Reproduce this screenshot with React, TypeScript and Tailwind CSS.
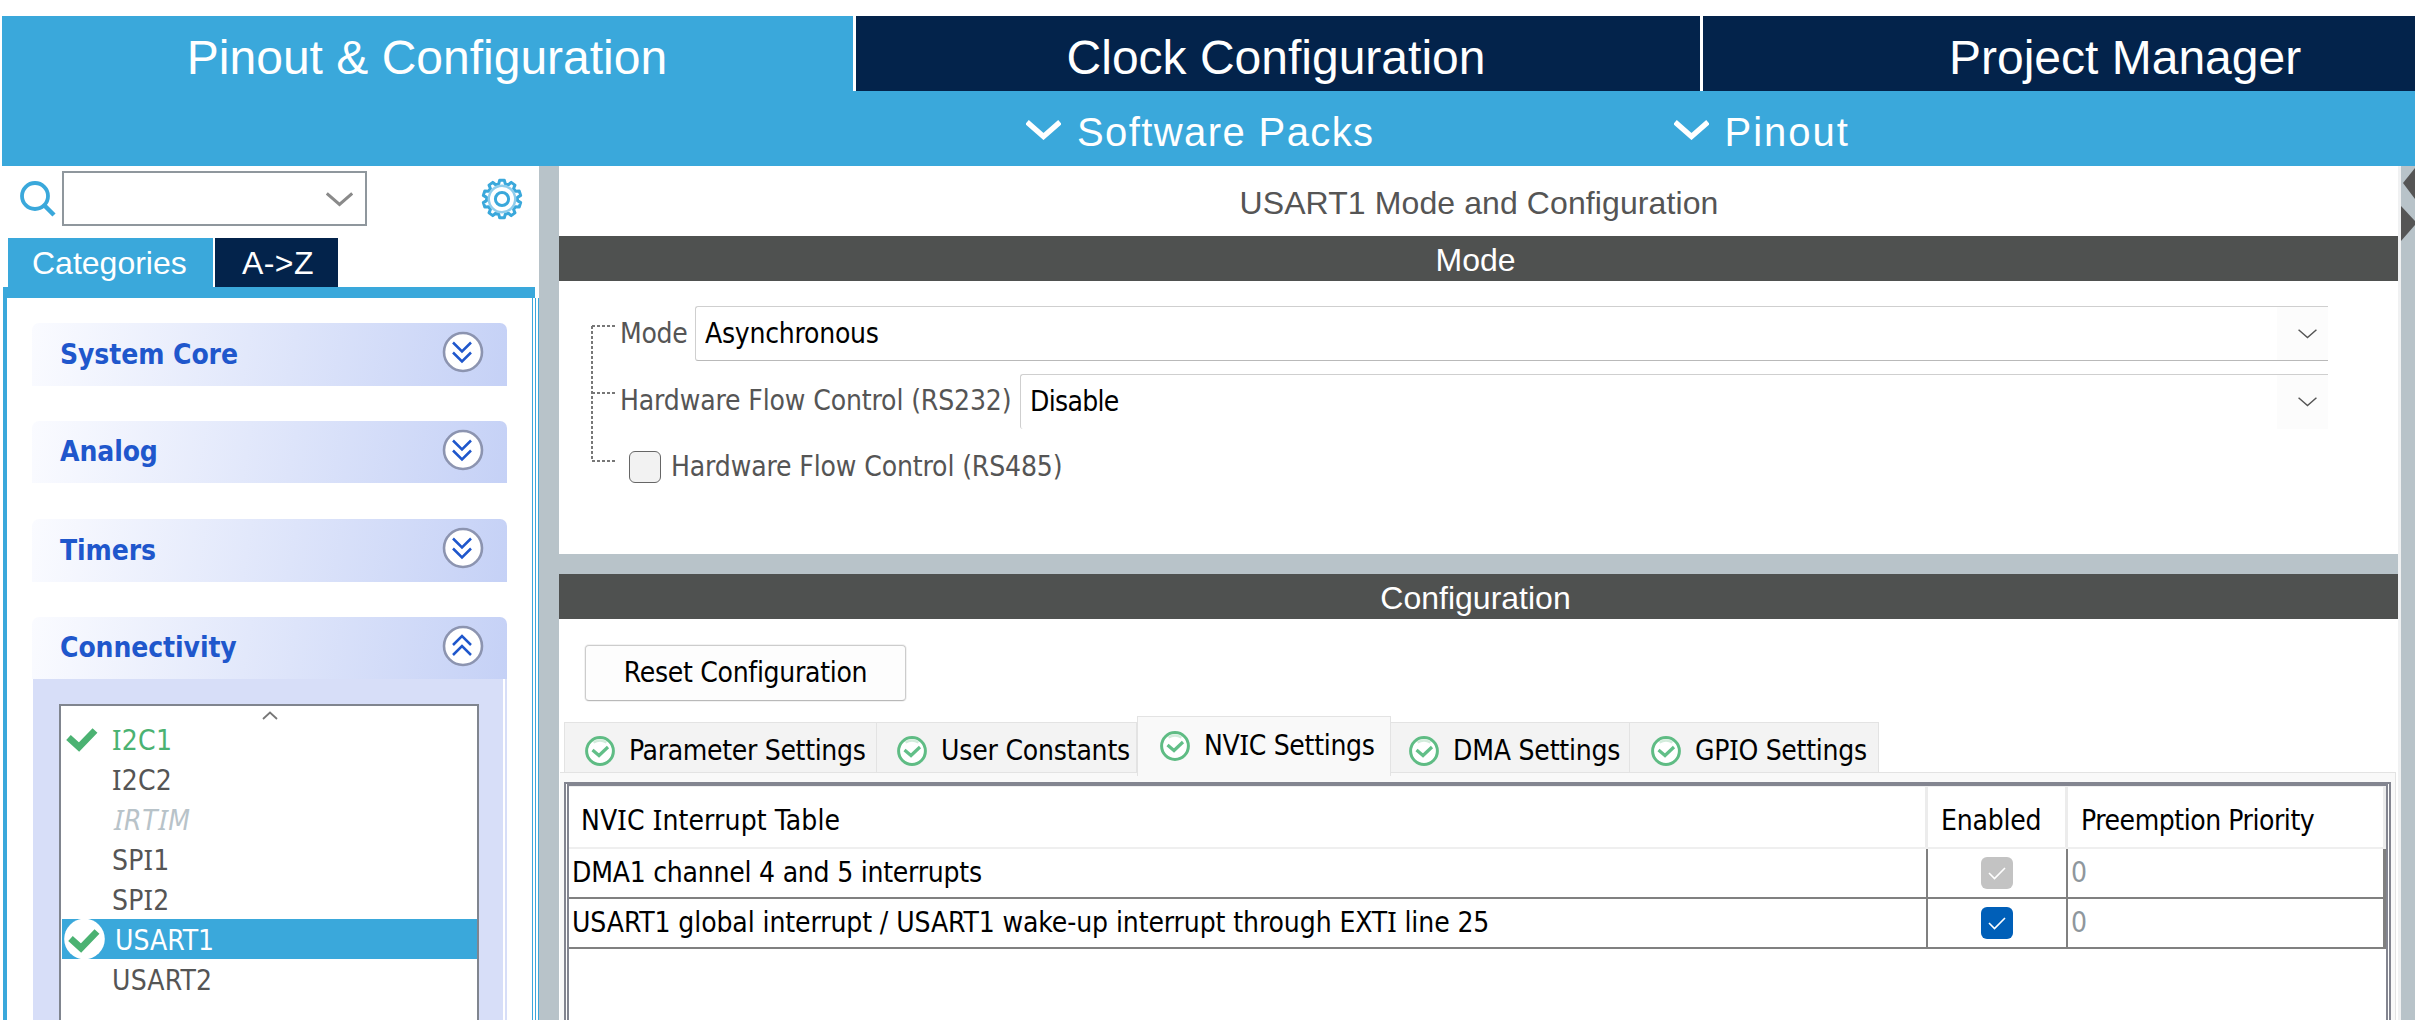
import React from "react";

const SANS = "font-['DejaVu_Sans_Condensed','DejaVu_Sans',sans-serif] text-[28px] leading-[40px] whitespace-nowrap";
const ARIAL = "font-['Liberation_Sans',sans-serif] whitespace-nowrap";

/** Label text whose capital "I" carries serifs. */
function Label({ text, className = "" }: { text: string; className?: string }) {
  return (
    <span className={className}>
      {text.split(/(I)/).map((part, i) =>
        part === "I" ? (
          <span key={i} className="font-['Noto_Sans',sans-serif] leading-none">I</span>
        ) : (
          part
        ),
      )}
    </span>
  );
}

function SearchIcon() {
  return (
    <svg width="36" height="36" viewBox="0 0 36 36" fill="none" stroke="#3aa8db" className="shrink-0">
      <circle cx="15" cy="15" r="13" strokeWidth="3.8" />
      <path d="M24.5 24.5 L34 34" strokeWidth="4.5" />
    </svg>
  );
}

function gearPath() {
  const pts: string[] = [];
  for (let i = 0; i < 10; i++) {
    const a = (i * 36 * Math.PI) / 180;
    const at = (r: number, d: number) => {
      const t = a + (d * Math.PI) / 180;
      return `${(21 + r * Math.sin(t)).toFixed(2)} ${(21 - r * Math.cos(t)).toFixed(2)}`;
    };
    pts.push(`${i ? "L" : "M"}${at(15.6, -12)}`, `L${at(19, -7)}`, `L${at(19, 7)}`, `L${at(15.6, 12)}`);
  }
  return pts.join(" ") + "Z";
}

function GearIcon() {
  return (
    <svg width="42" height="42" viewBox="0 0 42 42" fill="none" stroke="#3aa8db" className="shrink-0">
      <path d={gearPath()} strokeWidth="3" strokeLinejoin="round" />
      <circle cx="21" cy="21" r="13.2" stroke="#8fcdec" strokeWidth="2.4" />
      <circle cx="21" cy="21" r="6.6" strokeWidth="3" />
    </svg>
  );
}

function StatusIcon() {
  return (
    <svg width="30" height="30" viewBox="0 0 30 30" fill="none" className="shrink-0">
      <circle cx="15" cy="15" r="13.4" fill="#fff" stroke="#5fbc84" strokeWidth="3" />
      <path d="M8.5 6.5 Q15 2.5 21.5 6.5" stroke="#d3ecdc" strokeWidth="2.5" />
      <path d="M7.5 14 L14 19.5 L23 11" stroke="#62bf88" strokeWidth="3.2" />
    </svg>
  );
}

function Tick() {
  return <path d="M2.5 11.5 L13 21 L29 4.5" stroke="#4bb272" strokeWidth="6.8" />;
}

function Chevron({ className, width, color, weight = 5.5 }: { className?: string; width: number; color: string; weight?: number }) {
  return (
    <svg width={width} height={width * 0.6} viewBox="0 0 34 20.4" fill="none" className={className}>
      <path d="M1 3 L17 17 L33 3" stroke={color} strokeWidth={weight} />
    </svg>
  );
}

function Toggle({ open }: { open?: boolean }) {
  return (
    <svg width="42" height="42" viewBox="0 0 42 42" fill="none" className="shrink-0">
      <circle cx="21" cy="21" r="19" fill="#fff" stroke="#8c94b0" strokeWidth="2.6" />
      <path
        d={open ? "M11 20 L20 11 L29 20 M11 30 L20 21 L29 30" : "M11 11.5 L20 20.5 L29 11.5 M11 21.5 L20 30.5 L29 21.5"}
        stroke="#1f57cc"
        strokeWidth="2.5"
      />
    </svg>
  );
}

function Section({ title, open, className }: { title: string; open?: boolean; className: string }) {
  return (
    <div
      className={`${className} flex shrink-0 items-center justify-between rounded-t-[7px] bg-[linear-gradient(100deg,#fafbff_0%,#c5d1f6_100%)] pr-[23px] pl-[28px]`}
    >
      <span className={`${SANS} font-bold tracking-[-0.1px] text-[#1f57cc]`}>{title}</span>
      <div className="-mt-[5px] flex"><Toggle open={open} /></div>
    </div>
  );
}

function Peripheral({ name, color = "text-[#555]" }: { name: string; color?: string }) {
  return (
    <div className={`flex h-10 items-center pt-[3px] pl-[51px] tracking-[0.2px] ${SANS} ${color}`}>
      <Label text={name} />
    </div>
  );
}

function Sidebar() {
  return (
    <aside className="flex w-[539px] shrink-0 flex-col bg-white">
      <div className="flex h-[72px] shrink-0 pl-5">
        <div className="mt-[15px] flex"><SearchIcon /></div>
        <div className="mt-[5px] ml-[6px] flex h-[55px] w-[305px] items-center justify-end border-2 border-[#8f979d] pt-[2px] pr-[12px]">
          <Chevron width={27} color="#8a8a8a" weight={3.8} />
        </div>
        <div className="mt-3 ml-[114px] flex"><GearIcon /></div>
      </div>
      <div className={`flex h-[49px] shrink-0 gap-[2px] pl-2 text-[32px] leading-[48px] text-white ${ARIAL}`}>
        <div className="w-[205px] bg-[#3aa8db] pt-px pl-6">Categories</div>
        <div className="w-[123px] bg-[#03234b] pt-px pl-[27px] tracking-[0.4px]">A-&gt;Z</div>
      </div>
      <div className="ml-[3px] h-[11px] w-[532px] shrink-0 bg-[#3aa8db]" />
      <div className="flex min-h-0 flex-1">
        <div className="ml-[3px] flex w-[530px] flex-col border-r border-l-4 border-[#3aa8db] pt-[25px] pl-[25px]">
          <Section title="System Core" className="h-[63px] w-[475px]" />
          <Section title="Analog" className="mt-[35px] h-[62px] w-[475px]" />
          <Section title="Timers" className="mt-[36px] h-[63px] w-[475px]" />
          <Section title="Connectivity" open className="mt-[35px] h-[62px] w-[475px]" />
          <div className="ml-px flex min-h-0 w-[474px] flex-1 gap-[2px]">
            <div className="flex w-[470px] bg-[#d7def8] pt-[25px] pl-[26px]">
              <div className="w-[420px] border-2 border-b-0 border-[#80858f] bg-white">
                <div className="flex h-[13px] justify-center overflow-visible pl-px">
                  <svg width="16" height="9" viewBox="0 0 16 9" fill="none" className="mt-[5px] shrink-0">
                    <path d="M1 8 L8 1.5 L15 8" stroke="#777" strokeWidth="1.8" />
                  </svg>
                </div>
                <div className={`flex h-10 items-center tracking-[0.3px] ${SANS} text-[#4bb272]`}>
                  <svg width="32" height="27" viewBox="0 0 32 27" fill="none" className="ml-[5px] shrink-0"><Tick /></svg>
                  <Label text="I2C1" className="mt-[3px] ml-[14px]" />
                </div>
                <Peripheral name="I2C2" />
                <div className={`flex h-10 items-center pt-[3px] pl-[53px] italic tracking-[0.8px] ${SANS} text-[#b8c3c9]`}>
                  <Label text="IRTIM" />
                </div>
                <Peripheral name="SPI1" />
                <Peripheral name="SPI2" />
                <div className={`ml-px flex h-10 items-center bg-[#3aa8db] ${SANS} text-white`}>
                  <svg width="42" height="40" viewBox="0 0 42 40" fill="none" className="ml-[2px] shrink-0">
                    <circle cx="20.5" cy="20" r="20.3" fill="#fff" />
                    <g transform="translate(4 8)"><Tick /></g>
                  </svg>
                  <span className="mt-[3px] ml-[9px]">USART1</span>
                </div>
                <Peripheral name="USART2" />
              </div>
            </div>
            <div className="w-[2px] bg-[#d7def8]" />
          </div>
        </div>
        <div className="ml-[2px] w-px bg-[#3aa8db]" />
        <div className="ml-[2px] w-px bg-[#3aa8db]" />
      </div>
    </aside>
  );
}

function Bar({ title }: { title: string }) {
  return (
    <div className={`flex h-[45px] shrink-0 items-center justify-center bg-[#4f5150] pt-[2px] pr-[6px] text-[32px] leading-[40px] text-white ${ARIAL}`}>
      {title}
    </div>
  );
}

function Combo({ value, bottom, className = "" }: { value: string; bottom?: boolean; className?: string }) {
  return (
    <div
      className={`flex h-[55px] flex-1 items-center justify-between rounded-l-[3px] border-t border-l border-[#cfcfcf] pl-[9px] text-black ${bottom ? "border-b border-b-[#b9b9b9]" : ""}`}
    >
      <span className={className}>{value}</span>
      <div className="flex h-full w-[51px] items-center justify-end bg-[#fcfcfc] pr-[11px]">
        <Chevron width={19} color="#555" weight={2.6} />
      </div>
    </div>
  );
}

function ModePanel() {
  return (
    <div className={`flex h-[273px] shrink-0 pl-[32px] text-[#555] ${SANS}`}>
      <svg width="28" height="150" viewBox="0 0 28 150" fill="none" stroke="#777" strokeWidth="2" strokeDasharray="3 2" className="mt-[44px] shrink-0">
        <path d="M1 1 H24 M1 68 H24 M1 136 H24 M1 1 V136" />
      </svg>
      <div className="flex w-[1709px] flex-col pt-[25px]">
        <div className="flex h-[55px] items-center">
          <span className="w-[76px] pl-px tracking-[-0.3px]">Mode</span>
          <Combo value="Asynchronous" bottom className="tracking-[-0.25px]" />
        </div>
        <div className="mt-[12px] flex h-[56px] items-center">
          <span className="w-[401px] pl-px tracking-[-0.13px]">Hardware Flow Control (RS232)</span>
          <Combo value="Disable" className="tracking-[-0.7px]" />
        </div>
        <div className="mt-[22px] flex h-[32px] items-center">
          <div className="ml-[10px] h-8 w-8 rounded-[6px] border-[1.5px] border-[#666] bg-[#f2f2f2]" />
          <span className="ml-[10px] tracking-[-0.13px]">Hardware Flow Control (RS485)</span>
        </div>
      </div>
    </div>
  );
}

function ConfigTab({ text, className, active }: { text: string; className: string; active?: boolean }) {
  return (
    <div
      className={`${className} flex items-center border-t border-[#e3e3e3] text-black ${SANS} ${
        active ? "relative -mb-[4px] h-[60px] border-x bg-[#f9f9f9] pb-[2px]" : "h-[50px] border-r bg-[#f3f3f3] pt-[6px]"
      }`}
    >
      <StatusIcon />
      <Label text={text} className="ml-[14px]" />
    </div>
  );
}

function CheckBox({ disabled }: { disabled?: boolean }) {
  return (
    <div className={`flex h-8 w-8 items-center justify-center rounded-[6px] ${disabled ? "bg-[#c3c3c3]" : "bg-[#005fb8]"}`}>
      <svg width="18" height="14" viewBox="0 0 18 14" fill="none">
        <path d="M1 7 L6.5 12.5 L17 2" stroke="#fff" strokeWidth="1.6" />
      </svg>
    </div>
  );
}

function InterruptRow({ name, disabled, className = "" }: { name: string; disabled?: boolean; className?: string }) {
  return (
    <div className="flex h-[50px] shrink-0 border-b-2 border-[#808080]">
      <div className="flex w-[1359px] items-center border-r-2 border-[#808080] pl-[3px]">
        <Label text={name} className={className} />
      </div>
      <div className="flex w-[140px] items-center justify-center border-r-2 border-[#808080]">
        <CheckBox disabled={disabled} />
      </div>
      <div className="flex flex-1 items-center border-r-3 border-[#808080] pl-[3px] text-[#8f979d]">0</div>
    </div>
  );
}

function ConfigPanel() {
  return (
    <div className="flex min-h-0 flex-1 flex-col bg-white">
      <div className={`mt-[26px] ml-[26px] flex h-[56px] w-[321px] shrink-0 items-center justify-center rounded-[4px] border border-[#cccccc] border-b-[#b9b9b9] bg-[#fdfdfd] tracking-[-0.3px] text-black shadow-[0_0_0_1px_#f2f2f2] ${SANS}`}>
        Reset Configuration
      </div>
      <div className="mt-px flex h-[70px] shrink-0 items-end pl-[5px]">
        <ConfigTab text="Parameter Settings" className="w-[313px] border-l pl-[20px] tracking-[-0.32px]" />
        <ConfigTab text="User Constants" className="w-[260px] pl-[20px] tracking-[-0.2px]" />
        <ConfigTab text="NVIC Settings" active className="w-[254px] pl-[22px] tracking-[-0.3px]" />
        <ConfigTab text="DMA Settings" className="w-[239px] pl-[18px] tracking-[-0.2px]" />
        <ConfigTab text="GPIO Settings" className="w-[249px] pl-[21px] tracking-[-0.28px]" />
      </div>
      <div className="mr-[2px] ml-px flex min-h-0 flex-1 border-t border-r border-[#e3e3e3] bg-[#f9f9f9] px-[4px] pt-[9px]">
        <div className={`flex flex-1 flex-col border-x-2 border-t-2 border-[#838590] bg-white px-px text-black ${SANS}`}>
          <div className="flex min-h-0 flex-1 flex-col border-x-2 border-t-2 border-[#838590]">
            <div className="flex h-[63px] shrink-0 border-t border-b-2 border-[#efefef]">
              <div className="flex w-[1359px] items-center border-r-3 border-[#ececec] pt-[8px] pl-[12px]">
                <Label text="NVIC Interrupt Table" className="tracking-[0.12px]" />
              </div>
              <div className="flex w-[140px] items-center border-r-3 border-[#ececec] pt-[8px] pl-[13px] tracking-[-0.2px]">Enabled</div>
              <div className="flex flex-1 items-center border-r-3 border-[#ececec] pt-[8px] pl-[13px] tracking-[-0.45px]">Preemption Priority</div>
            </div>
            <InterruptRow name="DMA1 channel 4 and 5 interrupts" disabled className="tracking-[-0.23px]" />
            <InterruptRow name="USART1 global interrupt / USART1 wake-up interrupt through EXTI line 25" className="tracking-[-0.1px]" />
          </div>
        </div>
      </div>
    </div>
  );
}

export default function App() {
  return (
    <div className="flex h-[1020px] w-[2415px] flex-col overflow-hidden bg-white pt-4">
      <header className={`ml-[2px] shrink-0 bg-[#3aa8db] text-white ${ARIAL}`}>
        <nav className="flex h-[75px] overflow-hidden text-[48px] leading-[60px]">
          <div className="flex w-[851px] shrink-0 items-center justify-center pt-[8px] pr-px">Pinout &amp; Configuration</div>
          <div className="flex w-[847px] shrink-0 items-center justify-center border-l-3 border-white bg-[#03234b] pt-[8px] pr-[4px]">Clock Configuration</div>
          <div className="flex w-[715px] shrink-0 items-center border-l-3 border-white bg-[#03234b] pt-[8px] pl-[246px]">Project Manager</div>
        </nav>
        <div className="flex h-[75px] items-center pl-[1024px] text-[40px] leading-[50px]">
          <Chevron width={35} color="#fff" className="mt-px shrink-0" weight={5.2} />
          <span className="mt-[6px] ml-[16px] tracking-[1.4px]">Software Packs</span>
          <Chevron width={35} color="#fff" className="mt-px ml-[299px] shrink-0" weight={5.2} />
          <span className="mt-[6px] ml-[16px] tracking-[2px]">Pinout</span>
        </div>
      </header>
      <div className="flex min-h-0 flex-1">
        <Sidebar />
        <div className="w-5 shrink-0 bg-[#b8c3c9]" />
        <main className="flex w-[1839px] shrink-0 flex-col">
          <div className={`flex h-[70px] shrink-0 items-center justify-center pt-[4px] pl-px text-[32px] leading-[40px] tracking-[0.1px] text-[#555] ${ARIAL}`}>
            USART1 Mode and Configuration
          </div>
          <Bar title="Mode" />
          <ModePanel />
          <div className="h-5 shrink-0 bg-[#b8c3c9]" />
          <Bar title="Configuration" />
          <ConfigPanel />
        </main>
        <div className="w-[3px] shrink-0 bg-[#f0f1f2]" />
        <div className="w-[14px] shrink-0 bg-[#b8c3c9]">
          <svg width="14" height="80" viewBox="0 0 14 80" fill="#555">
            <path d="M2 17 L14 2 V33 Z" />
            <path d="M0 40 L14 55 V59 L0 75 Z" />
          </svg>
        </div>
      </div>
    </div>
  );
}
